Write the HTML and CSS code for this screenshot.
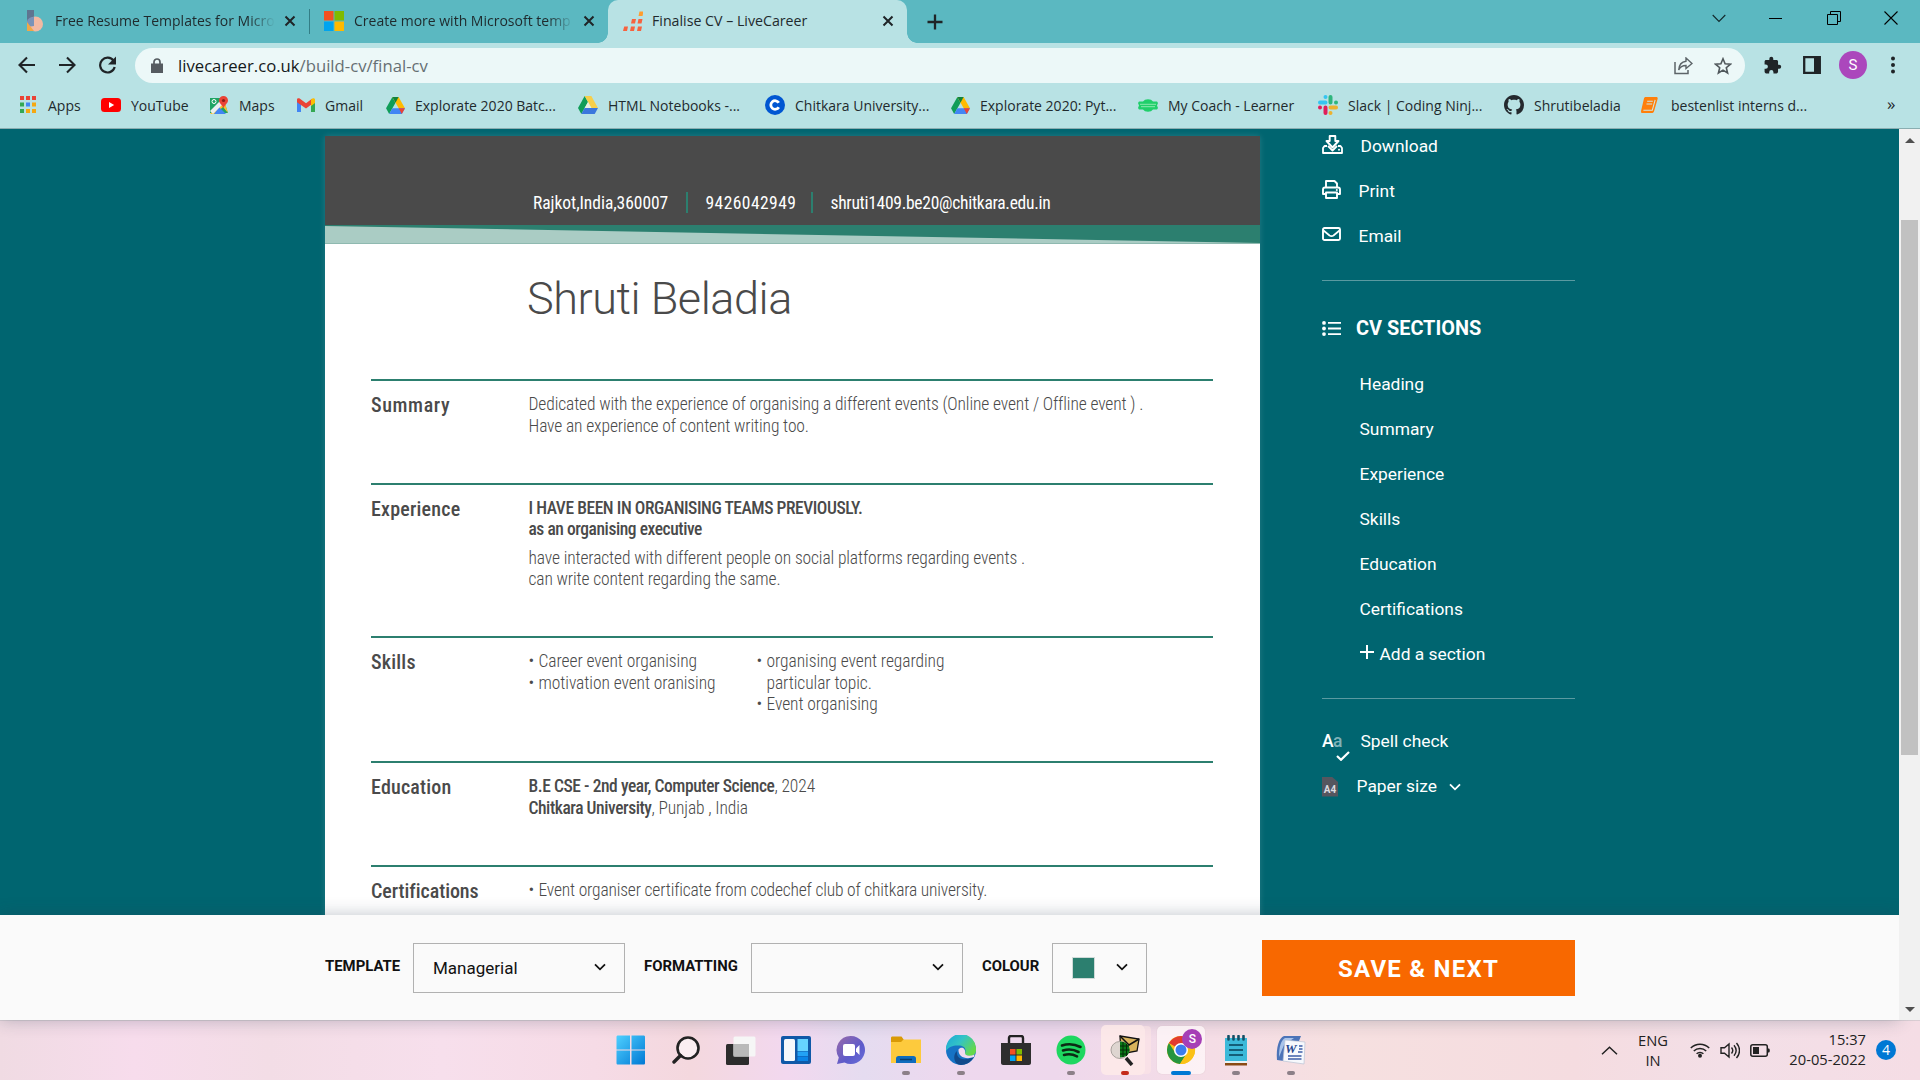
FILE: index.html
```html
<!DOCTYPE html>
<html lang="en">
<head>
<meta charset="utf-8">
<title>Finalise CV – LiveCareer</title>
<link rel="stylesheet" href="styles.css">
</head>
<body>
<svg class="defs" width="0" height="0">
  <symbol id="close" viewBox="0 0 12 12"><path d="M1.5 1.5l9 9M10.500 1.500l-9 9" stroke="#1f2427" stroke-width="2" fill="none"/></symbol>
  <symbol id="chev" viewBox="0 0 12 8"><path d="M1 1.300l5 5 5-5" stroke="currentColor" stroke-width="1.800" fill="none"/></symbol>
  <symbol id="drive" viewBox="0 0 20 18">
    <path d="M6.700 0L0 12l3.300 6 6.700-12z" fill="#0f9d58"/><path d="M6.700 0h6.600L20 12h-6.600z" fill="#ffba00"/><path d="M6.700 12H20l-3.300 6H3.300z" fill="#4285f4"/><path d="M13.400 12H20l-3.300 6z" fill="#ea4335"/><path d="M6.700 0h6.600L10 6z" fill="#11823b"/>
  </symbol>
  <symbol id="sheet" viewBox="0 0 20 18">
    <path d="M6.700 0L0 12l3.300 6 6.700-12z" fill="#0f9d58"/><path d="M6.700 0h6.600L20 12h-6.600z" fill="#f7cf4a"/><path d="M6.700 12H20l-3.300 6H3.300z" fill="#3a77dd"/><path d="M10 6l3.400 6H6.700z" fill="#e8f2df"/>
  </symbol>
</svg>

<header class="browser">
  <div class="tabstrip">
    <div class="tab tab-one">
      <svg width="17" height="22" viewBox="0 0 17 22"><path d="M1 0h7v15H1z" fill="#5f7590"/><circle cx="9.500" cy="14" r="7.500" fill="#f3b9a3"/><path d="M1 11a7 7 0 0 1 7-4v9l-7 1z" fill="#7a93b9"/><path d="M1 12l7 9H1z" fill="#f0a848"/></svg>
      <span class="tab-title fade">Free Resume Templates for Micro</span>
      <svg width="12" height="12"><use href="#close"/></svg>
    </div>
    <div class="tab-line"></div>
    <div class="tab tab-two">
      <svg width="20" height="20" viewBox="0 0 20 20"><path d="M0 0h9.500v9.500H0z" fill="#f25022"/><path d="M10.500 0H20v9.500h-9.500z" fill="#7fba00"/><path d="M0 10.500h9.500V20H0z" fill="#00a4ef"/><path d="M10.500 10.500H20V20h-9.500z" fill="#ffb900"/></svg>
      <span class="tab-title fade">Create more with Microsoft temp</span>
      <svg width="12" height="12"><use href="#close"/></svg>
    </div>
    <div class="tab tab-active">
      <svg width="20" height="20" viewBox="0 0 20 20"><g fill="#f7623e"><path d="M1.200 15.500h3.800L4 20H0zM8 15.500h4L11 20H7zM15 15.500h4L18 20h-4zM9 8h4l-1 4.500H8zM15.500 8h4l-1 4.500h-4z"/></g><path d="M16.500 0.500h4l-1 4.500h-4z" fill="#ff9d2e"/></svg>
      <span class="tab-title">Finalise CV – LiveCareer</span>
      <svg width="12" height="12"><use href="#close"/></svg>
    </div>
    <svg class="newtab" width="16" height="16" viewBox="0 0 16 16"><path d="M8 0.500v15M0.500 8h15" stroke="#1f2427" stroke-width="2.300"/></svg>
    <div class="winbtns">
      <svg width="14" height="9" viewBox="0 0 14 9"><path d="M0.700 1l6.300 6.500L13.300 1" stroke="#12282b" stroke-width="1.100" fill="none"/></svg>
      <svg width="14" height="14" viewBox="0 0 14 14"><path d="M0 7.500h13" stroke="#000" stroke-width="1"/></svg>
      <svg width="14" height="14" viewBox="0 0 14 14"><path d="M0.500 3.500h10v10h-10zM3.500 3.500v-3h10v10h-3" stroke="#000" fill="none"/></svg>
      <svg width="14" height="14" viewBox="0 0 14 14"><path d="M0.500 0.500l13 13M13.500 0.500l-13 13" stroke="#000" stroke-width="1.100"/></svg>
    </div>
  </div>

  <div class="toolbar">
    <svg width="18" height="18" viewBox="0 0 18 18"><path d="M17 9H2M9 1.500L1.500 9 9 16.500" stroke="#1f2427" stroke-width="2.100" fill="none"/></svg>
    <svg width="18" height="18" viewBox="0 0 18 18"><path d="M1 9h15M9 1.500L16.500 9 9 16.500" stroke="#1f2427" stroke-width="2.100" fill="none"/></svg>
    <svg width="19" height="18" viewBox="0 0 19 18"><path d="M15.600 4.800A7.400 7.400 0 1 0 16.700 11" stroke="#1f2427" stroke-width="2.200" fill="none"/><path d="M18 0.500v8h-8z" fill="#1f2427"/></svg>
    <div class="omnibox">
      <svg width="12" height="15" viewBox="0 0 12 15"><path d="M0 5.500h12V15H0z" fill="#555b60"/><path d="M3 6V4a3 3 0 0 1 6 0v2" stroke="#555b60" stroke-width="1.700" fill="none"/></svg>
      <span class="url">livecareer.co.uk<i>/build-cv/final-cv</i></span>
      <svg width="19" height="18" viewBox="0 0 19 18"><path d="M1 5v11.500h13V13" stroke="#5c6468" stroke-width="1.500" fill="none"/><path d="M12 1l6 5.500-6 5V8.500C8 8.500 6 10 4.700 13 5 8 7.500 4.800 12 4.200z" stroke="#5c6468" stroke-width="1.400" fill="none"/></svg>
      <svg width="18" height="18" viewBox="0 0 18 18"><path d="M9 1.800l2.100 5 5.300.4-4.100 3.500 1.300 5.300L9 13.100 4.400 16l1.300-5.300-4.100-3.500 5.300-.4z" stroke="#50585c" stroke-width="1.600" fill="none"/></svg>
    </div>
    <svg class="puzzle" width="19" height="19" viewBox="0 0 24 24"><path d="M20.500 11H19V7c0-1.100-.9-2-2-2h-4V3.500a2.500 2.500 0 0 0-5 0V5H4c-1.100 0-2 .9-2 2v3.800h1.500a2.700 2.700 0 0 1 0 5.400H2V20c0 1.100.9 2 2 2h3.800v-1.500a2.700 2.700 0 0 1 5.400 0V22H17c1.100 0 2-.9 2-2v-4h1.500a2.500 2.500 0 0 0 0-5z" fill="#1f2427"/></svg>
    <svg width="18" height="18" viewBox="0 0 18 18"><path d="M1.200 1.200h15.600v15.600H1.200z" stroke="#1f2427" stroke-width="2.300" fill="none"/><path d="M11 1h6v16h-6z" fill="#1f2427"/></svg>
    <span class="avatar">S</span>
    <svg class="dots" width="4" height="18" viewBox="0 0 4 18"><g fill="#1f2427"><circle cx="2" cy="2.500" r="2"/><circle cx="2" cy="9" r="2"/><circle cx="2" cy="15.500" r="2"/></g></svg>
  </div>

  <nav class="bookmarks">
    <a class="mk-apps"><svg width="18" height="18" viewBox="0 0 18 18"><g fill="#ea4335"><path d="M1 0h4v4H1zM7 0h4v4H7zM13 0h4v4h-4z"/></g><path d="M1 6.500h4v4H1zM1 13h4v4H1z" fill="#34a853"/><path d="M7 6.500h4v4H7z" fill="#4285f4"/><path d="M13 6.500h4v4h-4zM7 13h4v4H7zM13 13h4v4h-4z" fill="#f5a811"/></svg>Apps</a>
    <a><svg width="20" height="14" viewBox="0 0 20 14"><rect width="20" height="14" rx="3.500" fill="#f00"/><path d="M8 4l5.200 3L8 10z" fill="#fff"/></svg>YouTube</a>
    <a><svg width="19" height="19" viewBox="0 0 19 19"><path d="M0 2h13l5 15H0z" fill="#1fa463"/><path d="M0 18L14 4l4 13-5-6-8 7z" fill="#fbc02d"/><path d="M9 11l7 7H4z" fill="#4285f4"/><path d="M0 15L12 3l3 3L3 18z" fill="#e9edf0"/><circle cx="4" cy="5.500" r="2" stroke="#fff" fill="none"/><path d="M13.500 0a4.500 4.500 0 0 1 4.500 4.500c0 3-3.500 4-4.500 8-1-4-4.500-5-4.500-8A4.500 4.500 0 0 1 13.500 0z" fill="#ea4335"/><circle cx="13.500" cy="4.500" r="1.600" fill="#8c1d18"/></svg>Maps</a>
    <a><svg width="18" height="14" viewBox="0 0 18 14"><path d="M0 2v12h4V5z" fill="#4285f4"/><path d="M18 2v12h-4V5z" fill="#34a853"/><path d="M14 1l4 .5V5l-4 3z" fill="#fbbc04"/><path d="M0 1.500C0 0 2 0 3 .7l6 4.600L15 .7V6l-6 4.500L0 4.300z" fill="#ea4335"/><path d="M14 1.500c2-2 4-1.500 4 .5v2.500l-4 3z" fill="#fbbc04"/></svg>Gmail</a>
    <a><svg width="19" height="17"><use href="#drive"/></svg>Explorate 2020 Batc...</a>
    <a><svg width="20" height="18"><use href="#sheet"/></svg>HTML Notebooks -...</a>
    <a><svg width="20" height="20" viewBox="0 0 20 20"><circle cx="10" cy="10" r="10" fill="#0056d2"/><path d="M13.800 7.800a4.300 4.300 0 1 0 0 4.400" stroke="#fff" stroke-width="2.800" fill="none"/></svg>Chitkara University...</a>
    <a><svg width="19" height="17"><use href="#drive"/></svg>Explorate 2020: Pyt...</a>
    <a><svg width="20" height="15" viewBox="0 0 20 15"><path d="M1 3.500h4a5.500 4 0 0 1 10 0h4l1 1.500-1 2.500 1 2.500-1 1.500h-4a5.500 4 0 0 1-10 0H1L0 10l1-2.500L0 5z" fill="#1fcf6a"/><path d="M2 6.300h16M3 8.700h14" stroke="#a6efc0" stroke-width=".8"/></svg>My Coach - Learner</a>
    <a><svg width="20" height="20" viewBox="0 0 20 20"><g stroke-width="4" stroke-linecap="round"><path d="M7.500 2v0M2 7.500h5.500" stroke="#36c5f0"/><path d="M12.500 2v5.500M18 7.500h0" stroke="#2eb67d"/><path d="M12.500 12.500H18M12.500 18v0" stroke="#ecb22e"/><path d="M7.500 12.500V18M2 12.500h0" stroke="#e01e5a"/></g></svg>Slack | Coding Ninj...</a>
    <a><svg width="20" height="20" viewBox="0 0 16 16"><path fill="#24292e" d="M8 0C3.580 0 0 3.580 0 8c0 3.540 2.290 6.530 5.470 7.590.4.070.55-.17.55-.38 0-.19-.01-.82-.01-1.490-2.010.37-2.530-.49-2.690-.94-.09-.23-.48-.94-.82-1.130-.28-.15-.68-.52-.01-.53.63-.01 1.080.58 1.230.82.72 1.210 1.870.87 2.330.66.07-.52.28-.87.51-1.070-1.780-.2-3.640-.89-3.640-3.950 0-.87.31-1.590.82-2.150-.08-.2-.36-1.020.08-2.120 0 0 .67-.21 2.200.82.64-.18 1.320-.27 2-.27s1.360.09 2 .27c1.530-1.040 2.200-.82 2.200-.82.44 1.100.16 1.920.08 2.120.51.56.82 1.270.82 2.150 0 3.070-1.870 3.750-3.650 3.950.29.25.54.73.54 1.480 0 1.070-.01 1.930-.01 2.200 0 .21.15.46.55.38A8.010 8.010 0 0 0 16 8c0-4.420-3.580-8-8-8z"/></svg>Shrutibeladia</a>
    <a class="mk-book"><svg width="17" height="16" viewBox="0 0 18 17"><path d="M5 0h11c1.500 0 2 1 1.500 2.500L14 14.500c-.5 1.500-1 2.500-3 2.500H1.500C0 17-.3 15.500.2 14L3 2C3.300.7 4 0 5 0z" fill="#ff7f0a"/><path d="M6.500 4.500h6M5.800 7.500h6M2.500 14h9.500L15 3" stroke="#cfe8e4" stroke-width="1.100" fill="none"/></svg>bestenlist interns d...</a>
    <a class="more">»</a>
  </nav>
</header>

<div class="viewport">
  <main class="builder">
    <div class="stage">
      <article class="cv">
        <div class="cv-contact"><span class="c-town">Rajkot,India,360007</span><span class="c-phone">9426042949</span><span class="c-mail">shruti1409.be20@chitkara.edu.in</span></div>
        <svg class="cv-band" width="935" height="19" viewBox="0 0 935 19"><path d="M0 0h935v19H0z" fill="#2c7f6f"/><path d="M0 1l935 17H0z" fill="#aaccc4"/><path d="M0 18.500h935" stroke="#8fb9b0"/></svg>
        <h1>Shruti Beladia</h1>
        <section><h2 class="h-sum">Summary</h2><div><p>Dedicated with the experience of organising a different events (Online event / Offline event ) .</p><p>Have an experience of content writing too.</p></div></section>
        <section><h2>Experience</h2><div><p><b>I HAVE BEEN IN ORGANISING TEAMS PREVIOUSLY.</b></p><p class="role"><b>as an organising executive</b></p><p>have interacted with different people on social platforms regarding events .</p><p>can write content regarding the same.</p></div></section>
        <section><h2>Skills</h2><div class="skills"><ul><li>Career event organising</li><li>motivation event oranising</li></ul><ul><li>organising event regarding<br>particular topic.</li><li>Event organising</li></ul></div></section>
        <section><h2>Education</h2><div><p><b>B.E CSE - 2nd year, Computer Science</b>, 2024</p><p><b>Chitkara University</b>, Punjab , India</p></div></section>
        <section><h2 class="h-cert">Certifications</h2><ul class="certs"><li>Event organiser certificate from codechef club of chitkara university.</li></ul></section>
      </article>

      <aside class="side">
        <div class="row"><svg class="lift" width="21" height="19" viewBox="0 0 21 19"><path d="M7.700 1h5.600v5h3.200l-6 6.500L4.500 6h3.200z" stroke="#fff" stroke-width="1.900" fill="none" stroke-linejoin="round"/><path d="M5 11H2.500L1 13v5h19v-5l-1.500-2H16M6 11l4.500 4.500L15 11" stroke="#fff" stroke-width="1.800" fill="none" stroke-linejoin="round"/><circle cx="17" cy="14.800" r="1" fill="#fff"/></svg>Download</div>
        <div class="row"><svg class="lift" width="19" height="19" viewBox="0 0 19 19"><path d="M4 7.500V1h8.500L15 3.500v4M4 14H1V9.500c0-1.500 1-2 2-2h13c1 0 2 .5 2 2V14h-3M4 12.500h11V18H4z" stroke="#fff" stroke-width="1.900" fill="none" stroke-linejoin="round"/><circle cx="14.800" cy="10" r="1" fill="#fff"/></svg>Print</div>
        <div class="row"><svg class="lift" width="19" height="14" viewBox="0 0 19 14"><rect x="1" y="1" width="17" height="12" rx="1.500" stroke="#fff" stroke-width="1.900" fill="none"/><path d="M1.500 3.500L7.500 8.500c1.500 1 2.500 1 4 0l6-5" stroke="#fff" stroke-width="1.700" fill="none"/></svg>Email</div>
        <hr>
        <h3><svg width="19" height="15" viewBox="0 0 19 15"><g fill="#fff"><circle cx="2" cy="1.900" r="1.900"/><circle cx="2" cy="7.500" r="1.900"/><circle cx="2" cy="13.100" r="1.900"/><path d="M6 1h13v1.800H6zM6 6.600h13v1.800H6zM6 12.200h13V14H6z"/></g></svg>CV SECTIONS</h3>
        <div class="links">
          <div class="row">Heading</div><div class="row">Summary</div><div class="row">Experience</div><div class="row">Skills</div><div class="row">Education</div><div class="row">Certifications</div>
          <div class="row add"><svg class="lift" width="14" height="14" viewBox="0 0 14 14"><path d="M7 0v14M0 7h14" stroke="#fff" stroke-width="2"/></svg>Add a section</div>
        </div>
        <hr>
        <div class="row"><span class="aa">A<i>a</i><svg width="14" height="10" viewBox="0 0 14 10"><path d="M1 5l4 3.800L13 1" stroke="#fff" stroke-width="2.200" fill="none"/></svg></span>Spell check</div>
        <div class="row paper"><span class="a4">A4</span>Paper size<svg width="12" height="8"><use href="#chev"/></svg></div>
      </aside>
    </div>

    <footer class="controls">
      <label class="l-tpl">TEMPLATE</label>
      <div class="select wide"><span>Managerial</span><svg width="12" height="8"><use href="#chev"/></svg></div>
      <label class="l-fmt">FORMATTING</label>
      <div class="select wide"><svg width="12" height="8"><use href="#chev"/></svg></div>
      <label class="l-col">COLOUR</label>
      <div class="select small"><span class="swatch"></span><svg width="12" height="8"><use href="#chev"/></svg></div>
      <button class="save">SAVE &amp; NEXT</button>
    </footer>
  </main>
  <div class="scroll"><span class="up"></span><span class="thumb"></span><span class="down"></span></div>
</div>

<div class="taskbar">
  <div class="apps">
    <div class="app"><svg width="30" height="30" viewBox="0 0 30 30"><defs><linearGradient id="w" x1="0" y1="0" x2="1" y2="1"><stop offset="0" stop-color="#4fd0ff"/><stop offset="1" stop-color="#0078d4"/></linearGradient></defs><path d="M0.500 2c0-1 .5-1.500 1.500-1.500h12v14H0.500zM15.500 0.500h12c1 0 1.500.5 1.500 1.500v12.500H15.500zM0.500 15.500H14v14H2c-1 0-1.500-.5-1.500-1.500zM15.500 15.500H29V28c0 1-.5 1.500-1.500 1.500h-12z" fill="url(#w)"/></svg></div>
    <div class="app"><svg width="28" height="28" viewBox="0 0 28 28"><circle cx="16" cy="12" r="10.500" fill="#fbeef1" stroke="#222" stroke-width="2.600"/><path d="M8.500 19.500L2 26" stroke="#222" stroke-width="3.400" stroke-linecap="round"/></svg></div>
    <div class="app"><svg width="30" height="29" viewBox="0 0 30 29"><rect x="0" y="8" width="23" height="21" rx="1.500" fill="#2c2c2c"/><rect x="7.500" y="0.500" width="22" height="20" rx="1.500" fill="#f6f6f6"/><path d="M7.500 8H23v12.500H7.500z" fill="#b9b9b9"/></svg></div>
    <div class="app"><svg width="30" height="28" viewBox="0 0 30 28"><rect width="30" height="28" rx="2" fill="#1059a8"/><rect x="3" y="3" width="11" height="22" rx="1.500" fill="#f5f8fb"/><path d="M16.500 3H27v12H16.500z" fill="#66d3ff"/><path d="M16.500 15.500H27v4.500H16.500z" fill="#22a2f5"/><path d="M16.500 20.500H27V25H16.500z" fill="#0a84e6"/></svg></div>
    <div class="app"><svg width="30" height="30" viewBox="0 0 30 30"><defs><linearGradient id="c" x1="0" y1="0" x2="1" y2="1"><stop offset="0" stop-color="#9a6aa8"/><stop offset=".6" stop-color="#5d5bcb"/><stop offset="1" stop-color="#6a6fd8"/></linearGradient></defs><path d="M15 1a14 14 0 1 1-6.500 26.400L1 29l1.800-6.500A14 14 0 0 1 15 1z" fill="url(#c)"/><rect x="7" y="9" width="12" height="12" rx="2" fill="#fff"/><path d="M20 13.500l3.500-3.500v10L20 16.500z" fill="#fff"/></svg></div>
    <div class="app run"><svg width="30" height="28" viewBox="0 0 30 28"><path d="M0 2c0-1 .5-1.500 1.500-1.500h9L13 4H30v22H0z" fill="#d99a07"/><path d="M0 6h10l2.500-2.500H30V27H0z" fill="#fdca3d"/><path d="M5 27v-4.500c0-1.500 1-2.500 2.500-2.500h15c1.500 0 2.500 1 2.500 2.500V27z" fill="#0f6cbd"/><path d="M9 23.500h12" stroke="#0a3d6e" stroke-width="1.500"/></svg></div>
    <div class="app run"><svg width="30" height="30" viewBox="0 0 30 30"><defs><linearGradient id="e" x1="0" y1="0" x2="1" y2=".6"><stop offset="0" stop-color="#1ca6d8"/><stop offset=".5" stop-color="#33c3c6"/><stop offset="1" stop-color="#66d84a"/></linearGradient></defs><circle cx="15" cy="15" r="15" fill="#1673c5"/><path d="M0 13A15 15 0 0 1 30 15c0 4-3 6-6.500 6-3 0-5.500-1-4.500-3 1.500-3 0-7-5-7.500C8 10 3 11 0 16z" fill="url(#e)"/><path d="M11 16c-1 7 5 11 17 6-3 5-8 8-13 8C8 30 6 20 11 16z" fill="#114a8b"/><path d="M12.500 14.500c2.500-3.500 7.500-1.500 6.500 3.500 0 3 5 3.500 9.500 1.500L28 22c-8 3-16 0-15.500-7.500z" fill="#efd9ee"/></svg></div>
    <div class="app"><svg width="30" height="30" viewBox="0 0 30 30"><path d="M8 9V3c0-1 .8-2 2-2h10c1.200 0 2 1 2 2v6" stroke="#222" stroke-width="2.400" fill="none"/><path d="M0 8h30v20c0 1-1 2-2 2H2c-1 0-2-1-2-2z" fill="#2e2e2e"/><path d="M9 14h5.500v5.500H9z" fill="#f25022"/><path d="M15.500 14H21v5.500h-5.500z" fill="#7fba00"/><path d="M9 20.500h5.500V26H9z" fill="#00a4ef"/><path d="M15.500 20.500H21V26h-5.500z" fill="#ffb900"/></svg></div>
    <div class="app run"><svg width="30" height="30" viewBox="0 0 30 30"><circle cx="15" cy="15" r="14.500" fill="#1ed760"/><path d="M6 10.500c6-2 13-1.300 18.500 1.500M7 15.500c5-1.500 11-1 15.500 1.500M8 20c4-1.200 9-.8 13 1.300" stroke="#0c2a14" stroke-width="2.600" stroke-linecap="round" fill="none"/></svg></div>
    <div class="app run stack"><svg width="30" height="31" viewBox="0 0 30 31"><path d="M10 1l19 3-2 12-16 3z" fill="#d8b35c" stroke="#111" stroke-width="1.300"/><path d="M10 1l9 9L29 4" stroke="#111" stroke-width="1.500" fill="none"/><ellipse cx="10" cy="15" rx="9" ry="8.500" fill="#ded5d0" stroke="#a9a29d"/><path d="M10 6.500c6 0 10 4 9.500 9-.5 4-4 7-9.500 7z" fill="#0b7a18"/><path d="M13 7v15M16.500 9v12M10 11h9M10 15h9.500M10 19h8" stroke="#052c08"/><path d="M16 23l6 7" stroke="#222" stroke-width="3.500"/></svg></div>
    <div class="app run active"><svg width="30" height="30" viewBox="0 0 30 30"><circle cx="15" cy="15" r="14" fill="#fbc116"/><path d="M15 15L2.900 8A14 14 0 0 1 27.100 8z" fill="#e33b2e"/><path d="M2.900 8A14 14 0 0 0 14 29l7-11-12-.5z" fill="#25953f"/><path d="M15 8h12.100A14 14 0 0 1 14 29l7-11z" fill="#fbc116"/><circle cx="15" cy="15" r="7" fill="#fff"/><circle cx="15" cy="15" r="5.500" fill="#3b7ded"/></svg><span class="badge">S</span></div>
    <div class="app run"><svg width="24" height="31" viewBox="0 0 24 31"><path d="M1 3h22v25H1z" fill="#3cb9d9"/><path d="M1 26h22v2H1z" fill="#e8f2f5"/><path d="M1 28h22v2.500H1z" fill="#8a4a14"/><path d="M5 10h14M5 15h14M5 20h14" stroke="#145e78" stroke-width="2"/><path d="M4.500 1v3.500M9.500 1v3.500M14.500 1v3.500M19.500 1v3.500" stroke="#134f66" stroke-width="2.600" stroke-linecap="round"/></svg></div>
    <div class="app run"><svg width="30" height="30" viewBox="0 0 30 30"><path d="M1 25C0 12 3 3 8 1h17l-2 5H12L8 26z" fill="#4c74b8"/><path d="M3 22C3 12 5 5 9 3h9L8 10z" fill="#a9c4ea"/><path d="M9 5l20 2-1 22-21-3z" fill="#f7f9fd" stroke="#b9c3d4" stroke-width=".7"/><path d="M23 11h3.500M23 14h3.500M22 17h4.500M12 21h13.500M12 24h13.500" stroke="#3c5ea8" stroke-width="1.400"/><text x="9" y="18" class="wordmark">W</text></svg></div>
  </div>
  <div class="tray">
    <svg width="17" height="9" viewBox="0 0 17 9"><path d="M1 8.300l7.500-7 7.500 7" stroke="#222" stroke-width="1.500" fill="none"/></svg>
    <div class="lang">ENG<br>IN</div>
    <svg class="wifi" width="20" height="16" viewBox="0 0 20 16"><g stroke="#222" stroke-width="1.500" fill="none"><path d="M0.800 6a13 13 0 0 1 18.400 0M3.800 9a8.700 8.700 0 0 1 12.400 0M6.600 11.800a4.800 4.800 0 0 1 6.800 0"/></g><circle cx="10" cy="13.700" r="2" fill="#222"/></svg>
    <svg width="20" height="17" viewBox="0 0 20 17"><g stroke="#222" stroke-width="1.400" fill="none"><path d="M1 5.800h3.500L9 2v13l-4.500-3.800H1zM11.500 5.500c1.500 1.800 1.500 4.200 0 6M14 3.200c2.600 3.200 2.600 7.400 0 10.600M16.500 1c4 4.500 4 10.500 0 15"/></g></svg>
    <svg width="20" height="13" viewBox="0 0 20 13"><rect x="0.800" y="0.800" width="16.500" height="11.400" rx="2" stroke="#222" stroke-width="1.500" fill="none"/><path d="M3 3h6v7H3z" fill="#222"/><path d="M17.500 4.500h1.500c1 0 1 4 0 4h-1.500z" fill="#222"/></svg>
    <div class="clock">15:37<br>20-05-2022</div>
    <span class="count">4</span>
  </div>
</div>
</body>
</html>
```
FILE: styles.css
```css
* { box-sizing: border-box; }
body { margin: 0; width: 1920px; height: 1080px; overflow: hidden; font-family: "Open Sans", "Noto Sans", sans-serif; display: flex; flex-direction: column; }
svg { display: block; flex: none; }
.defs { position: absolute; }
i { font-style: normal; }
p, ul, h1, h2, h3 { margin: 0; padding: 0; list-style: none; }

/* Browser chrome */
.browser { height: 129px; flex: none; background: #b8e2e4; border-bottom: 1px solid #8aaeb1; color: #1f2a2d; }
.tabstrip { height: 43px; background: #5bb8c1; display: flex; align-items: center; }
.tab { display: flex; align-items: center; height: 43px; font-size: 14px; white-space: nowrap; padding-bottom: 1px; }
.tab-one { width: 309px; padding-left: 26px; gap: 11px; }
.tab-two { width: 298px; padding-left: 14px; gap: 10px; }
.tab-title { width: 220px; overflow: hidden; margin-top: -2px; }
.tab-one .tab-title { margin-left: 1px; margin-right: -2px; }
.tab-two .tab-title { margin-right: -1px; }
.fade { -webkit-mask-image: linear-gradient(90deg, #000 88%, transparent); mask-image: linear-gradient(90deg, #000 88%, transparent); }
.tab-line { width: 1px; height: 25px; background: #337e86; }
.tab-active { width: 299px; background: #b8e2e4; border-radius: 10px 10px 0 0; padding-left: 15px; gap: 9px; position: relative; }
.tab-active .tab-title { width: 221px; font-size: 14.2px; }
.tab-active::before, .tab-active::after { content: ""; position: absolute; bottom: 0; width: 10px; height: 10px; }
.tab-active::before { left: -10px; background: radial-gradient(circle at 0 0, transparent 9.500px, #b8e2e4 10px); }
.tab-active::after { right: -10px; background: radial-gradient(circle at 100% 0, transparent 9.500px, #b8e2e4 10px); }
.newtab { margin-left: 20px; }
.winbtns { margin: 0 22px 7px auto; display: flex; align-items: center; gap: 43.500px; }

.toolbar { height: 43px; margin-top: 1px; display: flex; align-items: center; padding-left: 18px; }
.toolbar > svg { margin-top: -1px; }
.toolbar > svg:nth-child(2) { margin-left: 22px; }
.toolbar > svg:nth-child(3) { margin-left: 22px; }
.omnibox { width: 1610px; height: 35px; margin-left: 18px; border-radius: 18px; background: #ecf8f8; display: flex; align-items: center; padding: 0 13px 0 16px; }
.url { font-size: 16.700px; margin: -1px auto 0 15px; color: #14191b; }
.url i { color: #666f73; }
.omnibox svg:nth-last-child(2) { margin-right: 21px; }
.toolbar .puzzle { margin: -1px 21px 0 18px; }
.avatar { width: 28px; height: 28px; border-radius: 50%; background: #ab47bc; color: #fff; font: 15px/28px Roboto, sans-serif; text-align: center; margin: -1px 24px 0 18px; }

.bookmarks { display: grid; grid-template-columns: 82px 109px 87px 89px 192px 187px 186px 187px 180px 186px 137px 246px 30px; padding-left: 19px; height: 38px; align-items: center; font-size: 14px; white-space: nowrap; margin-top: -1px; }
.bookmarks a { display: flex; align-items: center; gap: 10px; }
.bookmarks .mk-apps { gap: 11px; }
.bookmarks .mk-book { gap: 13px; }
.bookmarks .more { font-size: 17px; margin-top: -4px; }

/* Page */
.viewport { height: 891px; flex: none; display: flex; }
.builder { width: 1899px; background: #006570; display: flex; flex-direction: column; }
.stage { height: 786px; overflow: hidden; display: flex; align-items: flex-start; padding-left: 325px; gap: 62px; }
.cv { width: 935px; height: 1100px; margin-top: 7px; background: #fff; color: #4a4a4a; box-shadow: 0 0 6px rgba(255,255,255,.15); font: 300 17.500px/21.500px Roboto, sans-serif; font-stretch: 75%; letter-spacing: -.13px; white-space: nowrap; }
.cv-contact { height: 89px; background: #4a4a4a; color: #fff; padding: 56px 0 0 208px; display: flex; font-weight: 400; line-height: 22px; }
.cv-contact span { height: 21px; letter-spacing: -.05px; }
.cv-contact .c-town { width: 153px; }
.cv-contact .c-phone { width: 125px; padding-left: 17.500px; border-left: 2px solid #2c7f6f; letter-spacing: .45px; }
.cv-contact .c-mail { padding-left: 17.500px; border-left: 2px solid #2c7f6f; letter-spacing: -.28px; }
.cv h1 { font-size: 45px; line-height: 50px; font-weight: 300; font-stretch: 100%; letter-spacing: -.45px; margin: 30px 0 55px 202px; }
.cv section { margin: 0 47px 0 46px; border-top: 2px solid #2c7f6f; padding: 13.300px 0 45.300px; display: grid; grid-template-columns: 157.500px 1fr; }
.cv h2 { font-size: 20px; line-height: 22px; height: 21.500px; font-weight: 500; letter-spacing: .2px; }
.cv .h-sum { letter-spacing: .6px; }
.cv .h-cert { letter-spacing: -.05px; }
.cv b { font-weight: 500; letter-spacing: -.44px; }
.role { margin-bottom: 6.700px; }
.skills { display: grid; grid-template-columns: 228px 300px; letter-spacing: -.08px; }
.certs { letter-spacing: -.18px; }
.cv li { padding-left: 10px; position: relative; }
.cv li::before { content: "•"; position: absolute; left: 0; }

.side { width: 253px; margin-top: -5px; color: #fff; font: 17.400px/45px Roboto, sans-serif; }
.row { height: 45px; display: flex; align-items: center; gap: 17.500px; white-space: nowrap; }
.lift { margin-top: -5px; }
.side hr { width: 253px; height: 1px; border: 0; background: #5a9aa1; margin: 21px 0 0; }
.side h3 { font-size: 19.900px; height: 45px; margin: 25px 0 11px; display: flex; align-items: center; gap: 15px; }
.side h3 svg { margin-top: -1px; }
.links { padding-left: 37.500px; }
.add { gap: 6px; }
.links + hr + .row { margin-top: 20px; }
.aa { position: relative; width: 21px; font-size: 17.500px; font-weight: 500; letter-spacing: -.5px; }
.aa i { color: #80b2b8; }
.aa svg { position: absolute; left: 14px; top: 32px; }
.a4 { width: 16px; height: 20px; background: #55565f; clip-path: polygon(0 0, 60% 0, 100% 28%, 100% 100%, 0 100%); font: bold 10px/25px Roboto, sans-serif; text-align: center; color: #dcdce0; }
.paper { gap: 18.500px; }
.paper svg { margin-left: -6px; }

.controls { height: 105px; background: #fafafa; box-shadow: 0 0 16px rgba(40,60,80,.3); position: relative; display: flex; align-items: center; padding: 0 0 0 325px; font: 17px Roboto, sans-serif; color: #111; }
.controls label { font-size: 14.900px; font-weight: 700; margin-bottom: 3px; white-space: nowrap; }
.l-tpl { width: 88px; }
.l-fmt { width: 107px; margin-left: 19px; }
.l-col { width: 70px; margin-left: 19px; }
.select { height: 50px; border: 1px solid #b1b1b1; display: flex; align-items: center; padding: 0 18px 0 19px; margin-top: 1px; }
.select svg { margin: -3px 0 0 auto; }
.select span { margin-top: -1px; }
.wide { width: 212px; }
.small { width: 95px; }
.swatch { width: 23px; height: 22px; background: #2c7f6f; border: 1px solid #cfdad8; }
.save { width: 313px; height: 56px; margin: 1px 0 0 115px; padding-top: 2px; border: 0; background: #f86800; color: #fff; font: 700 24px Roboto, sans-serif; letter-spacing: 1.250px; }

.scroll { width: 21px; position: relative; background: #f1f1f1; display: flex; flex-direction: column; align-items: center; padding: 9px 0 8px; }
.up, .down { border: 5px solid transparent; }
.up { border-top: 0; border-bottom-color: #505050; }
.down { border-bottom: 0; border-top-color: #505050; margin-top: auto; }
.thumb { width: 17px; height: 535px; background: #c1c1c1; margin-top: 77px; }

/* Taskbar */
.taskbar { height: 60px; flex: none; border-top: 1px solid #d9cdd3; background: linear-gradient(90deg, #f0dbe3 0, #f7dcec 7%, #f3dde6 14%, #f7dfec 23%, #f6dbe6 31%, #f4d8de 36%, #f2d8ef 41%, #e5dcf0 45%, #eed8ee 50%, #eed8ec 55%, #f5dde6 63%, #f6e0e0 70%, #f5dce0 82%, #f3dfe7 90%, #f5dde5 100%); display: flex; justify-content: space-between; }
.apps { display: grid; grid-template-columns: repeat(13, 55.050px); padding-left: 603px; }
.app { height: 58px; position: relative; display: flex; align-items: center; justify-content: center; }
.run::after { content: ""; position: absolute; bottom: 4px; width: 8px; height: 4px; border-radius: 2px; background: #8c8088; }
.stack { width: 44px; height: 50px; margin: 4px 0 0 3px; padding-left: 4px; background: rgba(255,235,232,.8); border-radius: 5px; box-shadow: 7px 0 0 -1px rgba(255,232,230,.5); }
.stack::after { background: #c42b1c; bottom: 0; }
.active { width: 48px; height: 48px; margin: 5px 0 0 4px; background: rgba(255,248,250,.75); border-radius: 5px; box-shadow: 0 0 1px #cbb; }
.active::after { width: 20px; background: #0078d4; bottom: -1px; }
.badge { position: absolute; left: 25px; top: 3px; width: 20px; height: 20px; border-radius: 50%; background: #a63fb6; color: #fff; font: 500 12px/20px Roboto, sans-serif; text-align: center; }
.wordmark { font: italic bold 13px "Liberation Serif", serif; fill: #28488f; }
.tray { display: flex; align-items: center; margin-right: 24px; color: #222; font-size: 14.700px; line-height: 20px; padding-bottom: 1px; }
.lang { width: 40px; margin: -1px 17px 0 15px; text-align: center; }
.tray svg + svg { margin-left: 10px; }
.clock { width: 86px; text-align: right; margin: -2px 0 0 10px; }
.count { width: 20px; height: 20px; border-radius: 50%; background: #0078d4; color: #fff; font-size: 14px; text-align: center; margin-left: 10px; }
```
